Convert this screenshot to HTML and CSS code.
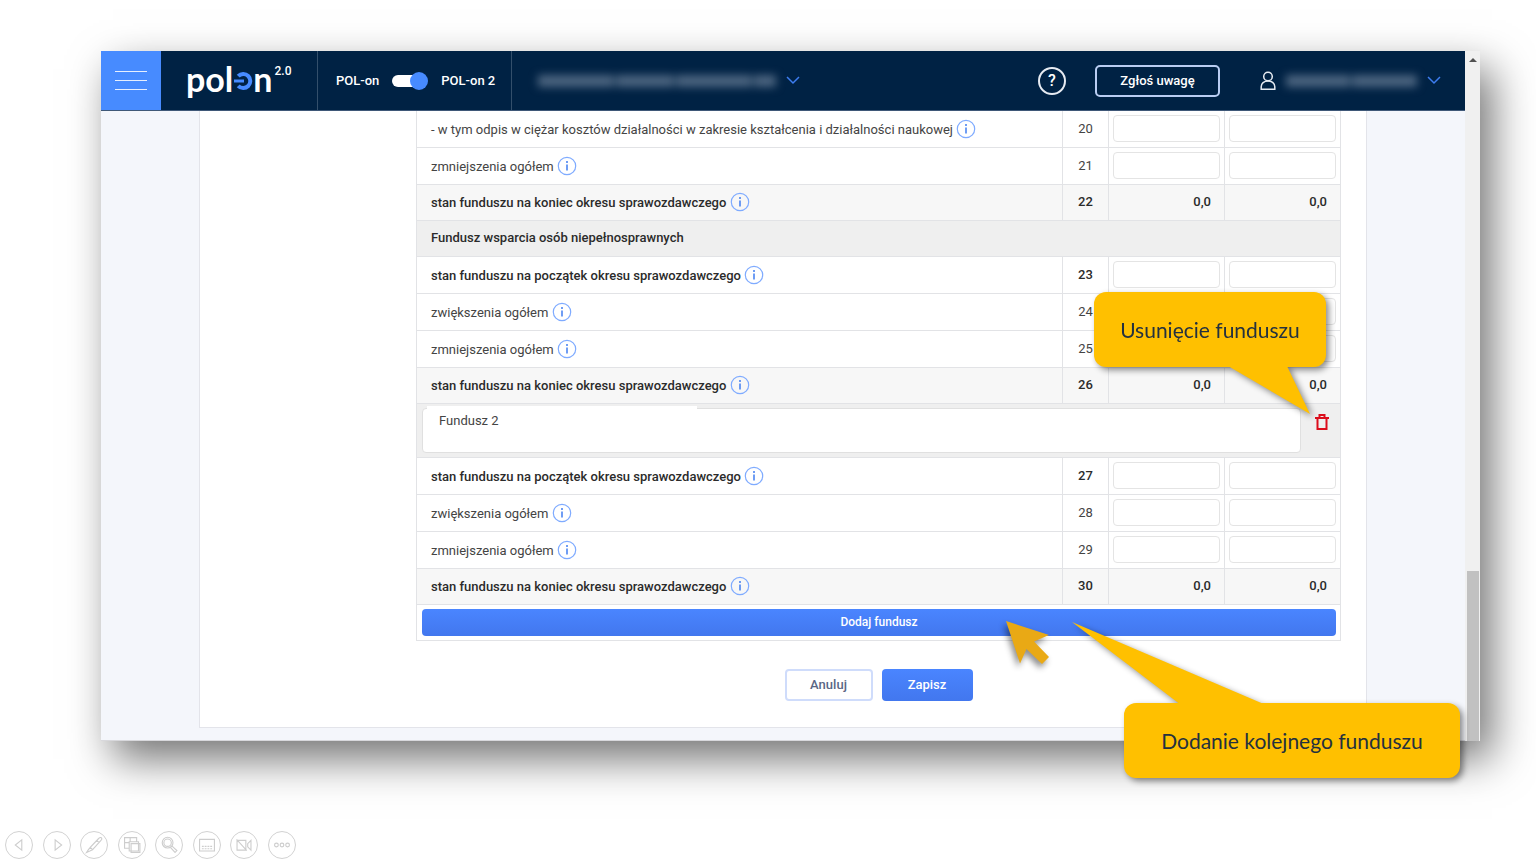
FILE: index.html
```html
<!DOCTYPE html>
<html lang="pl">
<head>
<meta charset="utf-8">
<title>POL-on 2.0</title>
<link rel="stylesheet" href="styles.css">
</head>
<body>
<svg class="sprite" aria-hidden="true">
  <symbol id="info" viewBox="0 0 20 20"><circle cx="10" cy="10" r="8.700" fill="none" stroke="#7fabff" stroke-width="1.2"/><path d="M10 8.6v6" stroke="#3f7df0" stroke-width="1.500"/><circle cx="10" cy="6" r="1" fill="#3f7df0"/></symbol>
  <symbol id="chevron" viewBox="0 0 14 9"><path d="M1 1l6 6 6-6" fill="none" stroke="#3d7df0" stroke-width="1.5"/></symbol>
</svg>
<div class="slide">
  <div class="window">
    <div class="app">
      <header class="topbar">
        <button class="menu" aria-label="Menu"><span></span><span></span><span></span></button>
        <div class="logo">
          <span class="logo-text">pol</span>
          <svg class="logo-o" viewBox="0 0 20 20" width="20" height="20" aria-hidden="true"><path d="M5.2 5.2A7 7 0 1 1 5.2 14.8" fill="none" stroke="#478bff" stroke-width="4"/><path d="M1 10h10" stroke="#478bff" stroke-width="3"/></svg>
          <span class="logo-text">n</span>
          <span class="logo-ver">2.0</span>
        </div>
        <div class="version">
          <span>POL-on</span>
          <input class="toggle" type="checkbox" checked aria-label="POL-on 2">
          <span>POL-on 2</span>
        </div>
        <button class="picker institution" aria-label="Instytucja">
          <span class="redacted"><i class="w-l"></i><i class="w-m"></i><i class="w-l"></i><i class="w-s"></i></span>
          <svg width="14" height="9" aria-hidden="true"><use href="#chevron"/></svg>
        </button>
        <button class="help" aria-label="Pomoc">?</button>
        <button class="report">Zgłoś uwagę</button>
        <button class="picker account" aria-label="Konto">
          <svg width="16" height="20" viewBox="0 0 16 20" fill="none" stroke="#e6ebf2" stroke-width="1.5" aria-hidden="true"><circle cx="8" cy="5.5" r="4.3"/><path d="M1.2 18.3v-2.5C1.2 12.500 4 10 8 10s6.800 2.500 6.800 5.800v2.500z"/></svg>
          <span class="redacted"><i class="w-m"></i><i class="w-s"></i></span>
          <svg width="14" height="9" aria-hidden="true"><use href="#chevron"/></svg>
        </button>
      </header>
      <main class="page">
        <form class="card">
          <table class="funds">
            <colgroup><col><col class="col-no"><col class="col-val"><col class="col-val"></colgroup>
            <tbody>
              <tr><td>- w tym odpis w ciężar kosztów działalności w zakresie kształcenia i działalności naukowej <svg class="info"><use href="#info"/></svg></td><td class="no">20</td><td class="field"><input aria-label="20 a"></td><td class="field"><input aria-label="20 b"></td></tr>
              <tr><td>zmniejszenia ogółem <svg class="info"><use href="#info"/></svg></td><td class="no">21</td><td class="field"><input aria-label="21 a"></td><td class="field"><input aria-label="21 b"></td></tr>
              <tr class="strong sum"><td>stan funduszu na koniec okresu sprawozdawczego <svg class="info"><use href="#info"/></svg></td><td class="no">22</td><td class="num">0,0</td><td class="num">0,0</td></tr>
              <tr class="strong head"><th colspan="4">Fundusz wsparcia osób niepełnosprawnych</th></tr>
              <tr class="strong"><td>stan funduszu na początek okresu sprawozdawczego <svg class="info"><use href="#info"/></svg></td><td class="no">23</td><td class="field"><input aria-label="23 a"></td><td class="field"><input aria-label="23 b"></td></tr>
              <tr><td>zwiększenia ogółem <svg class="info"><use href="#info"/></svg></td><td class="no">24</td><td class="field"><input aria-label="24 a"></td><td class="field"><input aria-label="24 b"></td></tr>
              <tr><td>zmniejszenia ogółem <svg class="info"><use href="#info"/></svg></td><td class="no">25</td><td class="field"><input aria-label="25 a"></td><td class="field"><input aria-label="25 b"></td></tr>
              <tr class="strong sum"><td>stan funduszu na koniec okresu sprawozdawczego <svg class="info"><use href="#info"/></svg></td><td class="no">26</td><td class="num">0,0</td><td class="num">0,0</td></tr>
              <tr class="head"><td class="name-cell" colspan="4">
                <div class="name-row">
                  <div class="name-wrap"><textarea class="name" aria-label="Nazwa funduszu">Fundusz 2</textarea></div>
                  <button type="button" class="trash" aria-label="Usuń fundusz"><svg width="14" height="18" viewBox="0 0 14 18" fill="none" stroke="#dc0d1c" stroke-width="2" aria-hidden="true"><path d="M0 5h14M4.500 4V2h5v2M2.500 5v11h9V5"/></svg></button>
                </div>
              </td></tr>
              <tr class="strong"><td>stan funduszu na początek okresu sprawozdawczego <svg class="info"><use href="#info"/></svg></td><td class="no">27</td><td class="field"><input aria-label="27 a"></td><td class="field"><input aria-label="27 b"></td></tr>
              <tr><td>zwiększenia ogółem <svg class="info"><use href="#info"/></svg></td><td class="no">28</td><td class="field"><input aria-label="28 a"></td><td class="field"><input aria-label="28 b"></td></tr>
              <tr><td>zmniejszenia ogółem <svg class="info"><use href="#info"/></svg></td><td class="no">29</td><td class="field"><input aria-label="29 a"></td><td class="field"><input aria-label="29 b"></td></tr>
              <tr class="strong sum"><td>stan funduszu na koniec okresu sprawozdawczego <svg class="info"><use href="#info"/></svg></td><td class="no">30</td><td class="num">0,0</td><td class="num">0,0</td></tr>
              <tr class="foot"><td class="add-cell" colspan="4"><button type="button" class="add">Dodaj fundusz</button></td></tr>
            </tbody>
          </table>
          <div class="actions">
            <button type="button" class="btn cancel">Anuluj</button>
            <button type="button" class="btn save">Zapisz</button>
          </div>
        </form>
      </main>
    </div>
    <div class="scrollbar" aria-hidden="true"><span class="arrow"></span><span class="thumb"></span></div>

    <div class="callout callout-remove">Usunięcie funduszu
      <svg class="tail" width="84" height="50" viewBox="0 0 84 50" aria-hidden="true"><path d="M0 0h59l23 48z"/></svg>
    </div>
    <div class="callout callout-add">Dodanie kolejnego funduszu
      <svg class="tail" width="194" height="83" viewBox="0 0 194 83" aria-hidden="true"><path d="M0 0L109 83h85z"/></svg>
    </div>
    <svg class="cursor" width="44" height="44" viewBox="0 0 44 44" aria-hidden="true"><path d="M0 0L43 14L28 20.500L43 36L36 43L20.500 28L14 42.500z" fill="#e9a915"/></svg>
  </div>

  <nav class="slideshow" aria-label="Pokaz slajdów">
    <button aria-label="Poprzedni"><svg viewBox="0 0 28 28"><path d="M17 8.500v11L10 14z"/></svg></button>
    <button aria-label="Następny"><svg viewBox="0 0 28 28"><path d="M12 8.500v11l7-5.500z"/></svg></button>
    <button aria-label="Pióro"><svg viewBox="0 0 28 28"><path d="M21.500 6c1.500 1 1 2 0 3l-9 10-2.500-2.500 9-9.500c1-1 1.500-1.500 2.500-1zM10 16.500l-2 2.500-2 3 3.500-1.500 3-1.500M17 9l2.500 2.500"/></svg></button>
    <button aria-label="Slajdy"><svg viewBox="0 0 28 28"><path d="M11 17.500H6V6h13v4M6 11.500h5M12 6v4M11 10.500h10v10H11z"/><path d="M13 12.500h9.500v9.500H13z"/></svg></button>
    <button aria-label="Powiększ"><svg viewBox="0 0 28 28"><circle cx="12.500" cy="11.500" r="5.800"/><circle cx="12.500" cy="11.500" r="4"/><path d="M15.500 16.500l5 5.500 2-2-5.500-5"/></svg></button>
    <button aria-label="Napisy"><svg viewBox="0 0 28 28"><path d="M6 8h16v12.500H6z"/><path d="M8.500 15.500h11M8.500 18h11" stroke-dasharray="2 1"/></svg></button>
    <button aria-label="Kamera"><svg viewBox="0 0 28 28"><path d="M6.500 9H16v10.500H6.500zM6 8l11 12M18 12.500l3.500-3.500v10.500l-3.500-3.500z"/></svg></button>
    <button aria-label="Więcej"><svg viewBox="0 0 28 28"><circle cx="8" cy="14" r="2"/><circle cx="14" cy="14" r="2"/><circle cx="20" cy="14" r="2"/></svg></button>
  </nav>
</div>
</body>
</html>
```
FILE: styles.css
```css
* { box-sizing: border-box; }
body { margin: 0; background: #fff; color: #444; font: 13px/18px Roboto, "Liberation Sans", sans-serif; }
button { font: inherit; color: inherit; background: none; border: 0; padding: 0; }
.sprite { position: absolute; width: 0; height: 0; }

.slide { min-height: 100vh; display: flex; flex-direction: column; justify-content: space-between; gap: 24px; }
.window { position: relative; display: flex; margin: 51px 56px 0 101px; box-shadow: 12px 18px 40px rgba(0, 0, 0, .55); }
.app { flex: 1; min-width: 0; }

.topbar { display: flex; align-items: center; height: 60px; background: #024; border-bottom: 1px solid #3f5878; color: #fff; font-weight: 500; }
.menu { display: flex; flex-direction: column; align-items: center; justify-content: center; gap: 8px; align-self: stretch; width: 60px; background: #478bff; }
.menu span { width: 32px; height: 1px; background: #e6efff; }
.logo, .version { display: flex; align-items: center; align-self: stretch; border-right: 1px solid #334f6b; }
.logo { width: 157px; padding: 0 0 4px 25px; }
.logo-text { font: 700 34px/40px Lato, sans-serif; }
.logo-o { margin-top: 4px; }
.logo-ver { align-self: flex-start; margin: 11px 0 0 2px; font-size: 12px; }
.version { width: 194px; gap: 13px; padding-left: 18px; }
.toggle { appearance: none; display: flex; justify-content: flex-end; align-items: center; width: 36px; height: 12px; margin: 0; border-radius: 6px; background: linear-gradient(90deg, #fff 26px, transparent 26px); }
.toggle::before { content: ""; width: 18px; height: 18px; border-radius: 50%; background: #478bff; }
.picker { display: flex; align-items: center; gap: 10px; }
.institution { margin: 0 auto 0 26px; }
.redacted { display: flex; gap: 2px; filter: blur(4px); }
.redacted i { height: 12px; background: #4c6580; }
.w-l { width: 76px; }
.w-m { width: 58px; }
.w-s { width: 22px; }
.account { margin-right: 24px; }
.account .w-m { width: 64px; }
.account .w-s { width: 65px; }
.help { width: 28px; height: 28px; border: 2px solid #e6ebf2; border-radius: 50%; font-size: 16px; }
.report { width: 125px; height: 32px; margin: 0 40px 0 29px; border: 2px solid #b9cdf2; border-radius: 5px; }

.page { padding: 0 98px 12px; background: #f4f6fb; border-bottom: 1px solid #d8d8dc; }
.card { padding: 0 25px 26px 216px; background: #fff; border: 1px solid #e3e4ea; border-top: 0; }
.funds { width: 100%; border-collapse: collapse; table-layout: fixed; }
.col-no { width: 46px; }
.col-val { width: 116px; }
.funds tr { height: 37px; }
.funds tr:first-child, .funds .sum, .funds .head, .funds .foot { height: 36px; }
.funds tr:first-child td { border-top: 0; }
.funds td, .funds th { padding: 0 0 0 14px; border: 1px solid #e2e3e6; text-align: left; font-weight: 400; white-space: nowrap; }
.funds .strong td, .funds .strong th { font-weight: 500; color: #2b2b2b; }
.funds .sum { background: #f7f7f7; }
.funds .head { background: #efefef; }
.funds .no { padding: 0; text-align: center; }
.funds .num { padding: 0 13px 0 0; text-align: right; }
.funds .field { padding: 0 4px; }
.field input { display: block; width: 100%; height: 27px; border: 1px solid #e4e4e4; border-radius: 4px; background: #fff; font: inherit; }
.info { width: 20px; height: 20px; vertical-align: -5px; }
.funds .name-cell { padding: 4px 11px 4px 5px; }
.name-row { display: flex; align-items: flex-start; justify-content: space-between; gap: 14px; }
.name-wrap { position: relative; flex: 1; display: flex; }
.name-wrap::before { content: ""; position: absolute; top: -2px; left: 5px; width: 270px; height: 4px; background: #fff; }
.name { flex: 1; height: 45px; padding: 3px 16px; border: 1px solid #e0e0e0; border-radius: 4px; background: #fff; color: #444; font: inherit; resize: none; }
.trash { height: 28px; }
.trash svg { display: block; }
.funds .add-cell { padding: 0 4px 0 5px; }
.add { display: block; width: 100%; height: 27px; border-radius: 4px; font-size: 12px; }
.add, .save { background: linear-gradient(#4a85ff, #4277ee); color: #fff; font-weight: 500; }
.actions { display: flex; justify-content: center; gap: 9px; padding-top: 28px; }
.btn { height: 32px; border-radius: 4px; font-weight: 500; }
.cancel { width: 88px; border: 2px solid #cfdcfb; color: #5a6785; }
.save { width: 91px; }

.scrollbar { display: flex; flex-direction: column; justify-content: space-between; align-items: center; width: 15px; padding-top: 7px; background: #f0f0f0; }
.arrow { border: 4px solid transparent; border-top: 0; border-bottom: 4px solid #505050; }
.thumb { width: 12px; height: 170px; background: #c1c1c1; }

.callout { position: absolute; display: flex; align-items: center; justify-content: center; height: 75px; border-radius: 12px; background: #ffc000; color: #24313f; font: 21px/24px Lato, sans-serif; filter: drop-shadow(3px 3px 3px rgba(0, 0, 0, .45)); }
.callout-remove { top: 241px; right: 154px; width: 232px; }
.callout-add { top: 652px; right: 20px; width: 336px; }
.tail { position: absolute; fill: #ffc000; }
.callout-remove .tail { top: 74px; left: 134px; }
.callout-add .tail { bottom: 73px; left: -52px; }
.cursor { position: absolute; top: 570px; right: 430px; filter: drop-shadow(-2px 4px 3px rgba(0, 0, 0, .45)); }

.slideshow { display: flex; justify-content: space-between; width: 291px; margin: 0 0 5px 5px; }
.slideshow button { width: 28px; height: 28px; border: 1px solid #d2d2d2; border-radius: 50%; }
.slideshow svg { display: block; width: 26px; height: 26px; fill: none; stroke: #cdcdcd; stroke-width: 1.2; }
```
